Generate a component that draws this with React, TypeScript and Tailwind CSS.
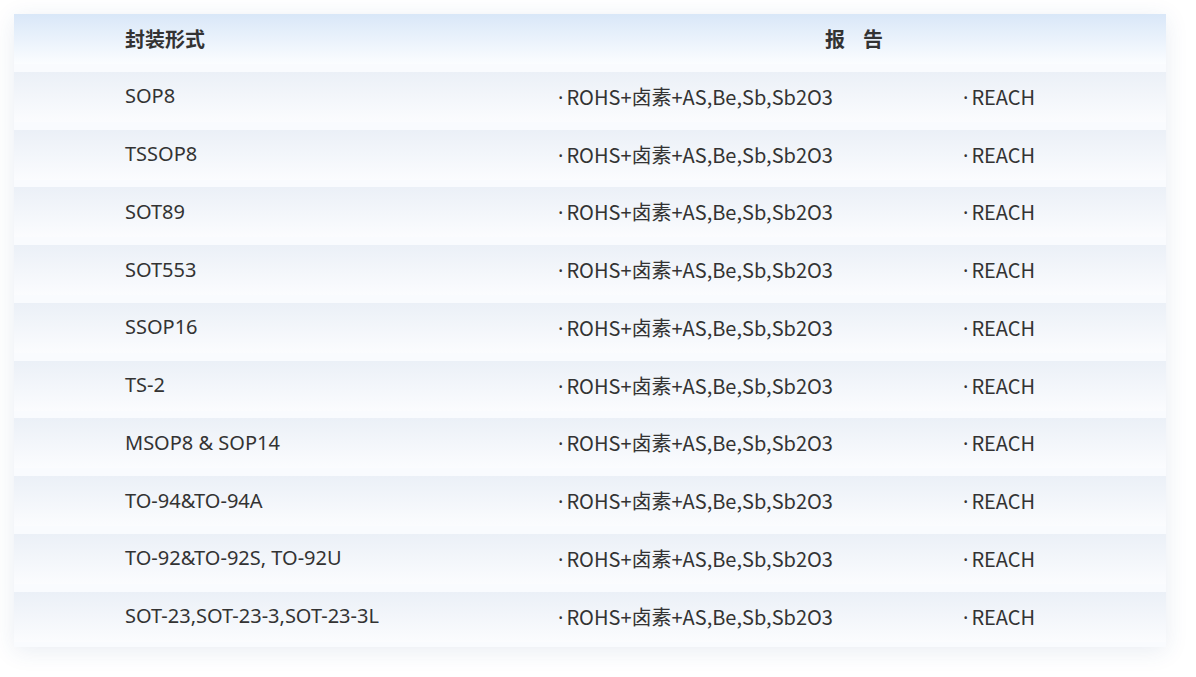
const rows = [
  'SOP8',
  'TSSOP8',
  'SOT89',
  'SOT553',
  'SSOP16',
  'TS-2',
  'MSOP8 & SOP14',
  'TO-94&TO-94A',
  'TO-92&TO-92S, TO-92U',
  'SOT-23,SOT-23-3,SOT-23-3L',
];

export default function App() {
  return (
    <div className="min-h-screen bg-white pt-[14px] pl-[14px]">
      <div className="w-[1152px] flex flex-col gap-[7.75px] pb-[5px] bg-[#f9fbfe] shadow-[0_4px_22px_rgba(40,80,140,0.10)] text-[#333]">
        <div className="grid grid-cols-[528px_1fr] h-[50px] items-center bg-gradient-to-b from-[#d9e7f8] to-[#fbfdff] font-['Noto_Sans_CJK_SC',sans-serif] text-[20px] font-bold">
          <div className="pl-[111px]">封装形式</div>
          <div className="flex justify-center gap-[18px]">
            <span>报</span>
            <span>告</span>
          </div>
        </div>
        {rows.map((name) => (
          <div
            key={name}
            className="grid grid-cols-[528px_405px_1fr] h-[50px] items-center bg-gradient-to-b from-[#ebf0f7] to-[#fbfcfe] text-[20px]"
          >
            <div className="pl-[111px] -mt-[1px] font-['Noto_Sans',sans-serif]">{name}</div>
            <div className="pl-[16px] pt-[1px] font-['Noto_Sans_CJK_SC',sans-serif]">
              <span className="font-['Noto_Sans',sans-serif] mr-[3px]">·</span>ROHS+卤素+AS,Be,Sb,Sb2O3
            </div>
            <div className="pl-[16px] pt-[1px] font-['Noto_Sans_CJK_SC',sans-serif]">
              <span className="font-['Noto_Sans',sans-serif] mr-[3px]">·</span>REACH
            </div>
          </div>
        ))}
      </div>
    </div>
  );
}
